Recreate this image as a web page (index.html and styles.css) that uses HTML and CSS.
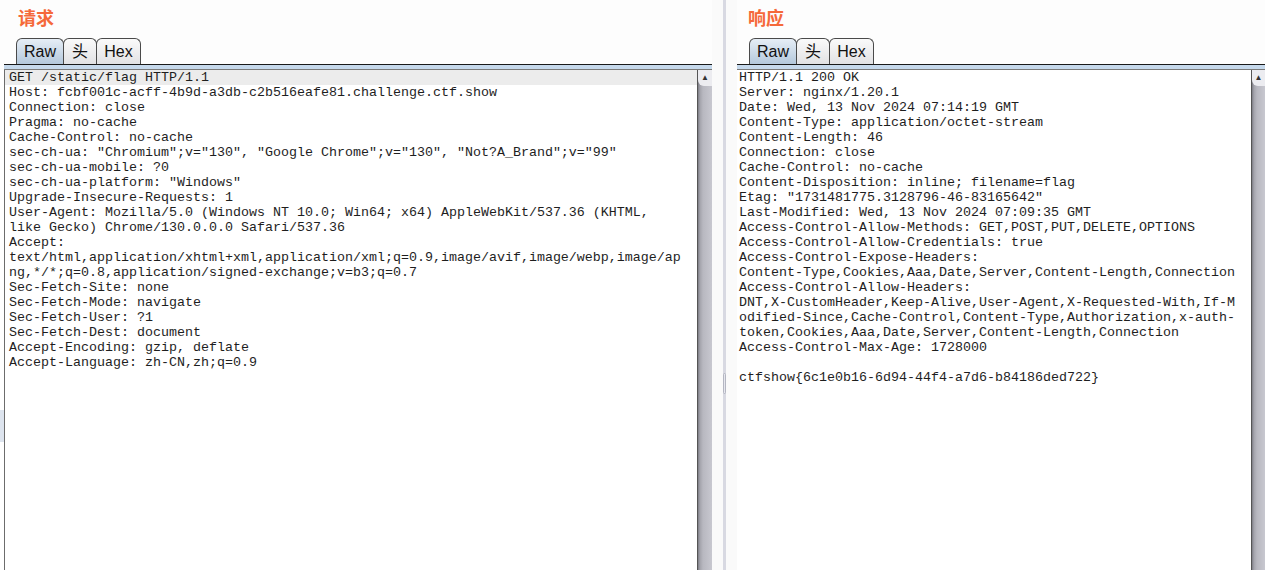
FILE: index.html
```html
<!DOCTYPE html>
<html lang="zh-CN">
<head>
    <meta charset="UTF-8">
    <title>请求 / 响应</title>
    <link rel="stylesheet" href="styles.css">
</head>
<body>

    <!-- Request pane -->
    <div class="pane pane-left">
        <div class="pane-title">请求</div>
        <div class="tabs">
            <div class="tab tab-raw active">Raw</div>
            <div class="tab tab-head">头</div>
            <div class="tab tab-hex">Hex</div>
        </div>
        <div class="tab-rule"></div>
        <div class="editor-row">
            <div class="edge"></div>
            <pre class="code"><span class="current">GET /static/flag HTTP/1.1</span>Host: fcbf001c-acff-4b9d-a3db-c2b516eafe81.challenge.ctf.show
Connection: close
Pragma: no-cache
Cache-Control: no-cache
sec-ch-ua: "Chromium";v="130", "Google Chrome";v="130", "Not?A_Brand";v="99"
sec-ch-ua-mobile: ?0
sec-ch-ua-platform: "Windows"
Upgrade-Insecure-Requests: 1
User-Agent: Mozilla/5.0 (Windows NT 10.0; Win64; x64) AppleWebKit/537.36 (KHTML,
like Gecko) Chrome/130.0.0.0 Safari/537.36
Accept:
text/html,application/xhtml+xml,application/xml;q=0.9,image/avif,image/webp,image/ap
ng,*/*;q=0.8,application/signed-exchange;v=b3;q=0.7
Sec-Fetch-Site: none
Sec-Fetch-Mode: navigate
Sec-Fetch-User: ?1
Sec-Fetch-Dest: document
Accept-Encoding: gzip, deflate
Accept-Language: zh-CN,zh;q=0.9</pre>
            <div class="vbar"><span class="up-arrow">▲</span></div>
        </div>
    </div>

    <!-- Split divider -->
    <div class="splitter">
        <div class="split-line"><span class="grip"></span></div>
    </div>

    <!-- Response pane -->
    <div class="pane pane-right">
        <div class="pane-title">响应</div>
        <div class="tabs">
            <div class="tab tab-raw active">Raw</div>
            <div class="tab tab-head">头</div>
            <div class="tab tab-hex">Hex</div>
        </div>
        <div class="tab-rule"></div>
        <div class="editor-row">
            <pre class="code">HTTP/1.1 200 OK
Server: nginx/1.20.1
Date: Wed, 13 Nov 2024 07:14:19 GMT
Content-Type: application/octet-stream
Content-Length: 46
Connection: close
Cache-Control: no-cache
Content-Disposition: inline; filename=flag
Etag: "1731481775.3128796-46-83165642"
Last-Modified: Wed, 13 Nov 2024 07:09:35 GMT
Access-Control-Allow-Methods: GET,POST,PUT,DELETE,OPTIONS
Access-Control-Allow-Credentials: true
Access-Control-Expose-Headers:
Content-Type,Cookies,Aaa,Date,Server,Content-Length,Connection
Access-Control-Allow-Headers:
DNT,X-CustomHeader,Keep-Alive,User-Agent,X-Requested-With,If-M
odified-Since,Cache-Control,Content-Type,Authorization,x-auth-
token,Cookies,Aaa,Date,Server,Content-Length,Connection
Access-Control-Max-Age: 1728000

ctfshow{6c1e0b16-6d94-44f4-a7d6-b84186ded722}</pre>
            <div class="vbar"><span class="up-arrow">▲</span></div>
        </div>
    </div>

</body>
</html>
```

FILE: styles.css
```css
body {
    margin: 0;
    height: 570px;
    overflow: hidden;
    display: flex;
    background-color: #fdfdfd;
    font-family: "Liberation Sans", Arial, sans-serif;
}

.pane {
    display: flex;
    flex-direction: column;
    height: 570px;
    flex-shrink: 0;
}

.pane-left {
    width: 712px;
}

.pane-right {
    flex: 1;
    min-width: 0;
}

.pane-title {
    height: 38px;
    box-sizing: border-box;
    padding-top: 5px;
    font-family: "Noto Sans CJK SC", "Liberation Serif", serif;
    font-size: 18px;
    font-weight: bold;
    line-height: 24px;
    color: #f5693a;
}

.pane-left .pane-title {
    padding-left: 18px;
}

.pane-right .pane-title {
    padding-left: 11px;
}

.tabs {
    display: flex;
    height: 26px;
}

.pane-left .tabs {
    margin-left: 16px;
}

.pane-right .tabs {
    margin-left: 12px;
}

    .tabs .tab {
        box-sizing: border-box;
        height: 26px;
        border: 1px solid #4a4a4a;
        border-bottom: none;
        border-radius: 6px 6px 0 0;
        margin-right: -1px;
        background: linear-gradient(#fafafa, #e2e2e4);
        font-size: 16px;
        line-height: 26px;
        text-align: center;
        color: #111;
    }

    .tabs .tab-raw {
        width: 48px;
    }

    .tabs .tab-head {
        width: 34px;
    }

    .tabs .tab-hex {
        width: 45px;
    }

    .tabs .tab.active {
        background: linear-gradient(#e6eef6, #b4c8dc);
    }

.tab-rule {
    height: 4px;
    border-top: 1px solid #1a1a1a;
    border-bottom: 1px solid #7a7a7a;
    background-color: #c6d9ec;
}

.pane-left .tab-rule {
    margin-left: 4px;
}

.editor-row {
    height: 500px;
    display: flex;
    align-items: stretch;
}

.edge {
    width: 4px;
    border-right: 1px solid #6c6c6c;
    background: linear-gradient(#ffffff 0, #ffffff 340px, #dde4ee 340px, #dde4ee 372px, #ffffff 372px);
}

.code {
    flex: 1;
    min-width: 0;
    margin: 0;
    padding: 0 0 0 4px;
    background-color: #fff;
    font-family: "Liberation Mono", "Courier New", monospace;
    font-size: 13.33px;
    line-height: 15px;
    color: #1e1e1e;
    white-space: pre;
    overflow: hidden;
}

.pane-right .code {
    padding-left: 2px;
}

    .code .current {
        display: block;
        margin-left: -4px;
        padding-left: 4px;
        background-color: #ececec;
    }

/* vertical scrollbar: arrow button on top, thumb filling the rest */
.vbar {
    box-sizing: border-box;
    width: 15px;
    flex: 0 0 15px;
    height: 500px;
    border-left: 1px solid #555;
    text-align: center;
    background-color: #b4b4bc;
    background-image: linear-gradient(to right, #7c7c84, #a4a4ac 2px, #b8b8c0 5px, #c8c8d0);
}

.pane-right .vbar {
    flex-basis: 14px;
    width: 14px;
}

    .vbar .up-arrow {
        display: block;
        height: 16px;
        border-bottom-left-radius: 6px;
        background-color: #ececf0;
        font-size: 8px;
        line-height: 16px;
        color: #333;
    }

.splitter {
    width: 25px;
    flex-shrink: 0;
    height: 100%;
    display: flex;
    justify-content: center;
    background-color: #fafafa;
}

.split-line {
    position: relative;
    width: 3px;
    height: 100%;
    margin-left: -1px;
    background-color: #d8d9e2;
}

    .split-line .grip {
        position: absolute;
        left: 0;
        top: 373px;
        width: 1px;
        height: 19px;
        border: 1px solid #b4b6c2;
        border-radius: 2px;
        background-color: #e6e7ee;
    }
```
